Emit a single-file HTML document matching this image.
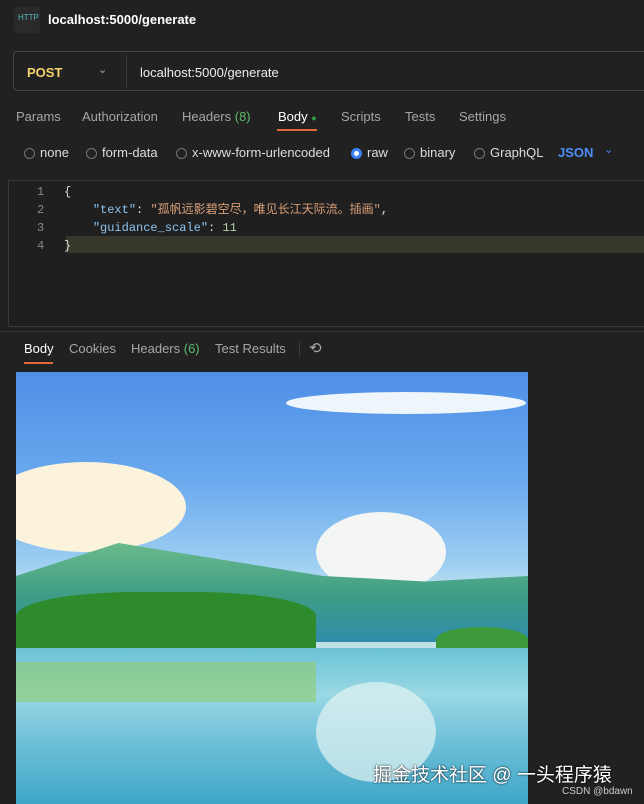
<!DOCTYPE html><html><head><meta charset="utf-8"><style>
body{margin:0;width:644px;height:804px;background:#212121;font-family:"Liberation Sans","Noto Sans CJK SC",sans-serif;position:relative;overflow:hidden;color:#ddd}
.a{position:absolute;white-space:nowrap}
.t{font-size:13px;color:#a6a6a6}
.mono{font-family:"Liberation Mono","Noto Sans CJK SC",monospace;font-size:12px}
.r{display:inline-block;width:11px;height:11px;border:1px solid #777;border-radius:50%;vertical-align:-2px;margin-right:5px;box-sizing:border-box}
</style></head><body>
<div class="a" style="left:14px;top:7px;width:26px;height:26px;background:#2a2a2a;border-radius:3px"></div>
<div class="a" style="left:18px;top:13px;font-size:8px;color:#5bb;">HTTP</div>
<div class="a" style="left:48px;top:12px;font-size:13px;color:#fff;font-weight:bold">localhost:5000/generate</div>
<div class="a" style="left:13px;top:51px;width:640px;height:40px;border:1px solid #444;border-radius:4px;box-sizing:border-box"></div>
<div class="a" style="left:126px;top:55px;width:1px;height:32px;background:#3a3a3a"></div>
<div class="a" style="left:27px;top:65px;font-size:13px;color:#f5d36e;font-weight:bold">POST</div>
<div class="a" style="left:98px;top:63px;font-size:11px;color:#aaa">⌄</div>
<div class="a" style="left:140px;top:65px;font-size:13px;color:#eee">localhost:5000/generate</div>
<div class="a t" style="left:16px;top:109px">Params</div>
<div class="a t" style="left:82px;top:109px">Authorization</div>
<div class="a t" style="left:182px;top:109px">Headers <span style="color:#5fb96b">(8)</span></div>
<div class="a" style="left:278px;top:109px;font-size:13px;color:#fff">Body <span style="color:#2ea043;font-size:9px">●</span></div>
<div class="a" style="left:277px;top:129px;width:40px;height:2px;background:#e0683b"></div>
<div class="a t" style="left:341px;top:109px">Scripts</div>
<div class="a t" style="left:405px;top:109px">Tests</div>
<div class="a t" style="left:459px;top:109px">Settings</div>
<div class="a" style="left:24px;top:145px;font-size:13px;color:#ddd"><span class="r"></span>none</div>
<div class="a" style="left:86px;top:145px;font-size:13px;color:#ddd"><span class="r"></span>form-data</div>
<div class="a" style="left:176px;top:145px;font-size:13px;color:#ddd"><span class="r"></span>x-www-form-urlencoded</div>
<div class="a" style="left:351px;top:145px;font-size:13px;color:#ddd"><span class="r" style="border:3px solid #3b82f6;background:#fff"></span>raw</div>
<div class="a" style="left:404px;top:145px;font-size:13px;color:#ddd"><span class="r"></span>binary</div>
<div class="a" style="left:474px;top:145px;font-size:13px;color:#ddd"><span class="r"></span>GraphQL</div>
<div class="a" style="left:558px;top:145px;font-size:13px;color:#4c8ef7;font-weight:bold">JSON</div>
<div class="a" style="left:604px;top:143px;font-size:11px;color:#4c8ef7">⌄</div>
<div class="a" style="left:8px;top:180px;width:640px;height:145px;border-left:1px solid #3a3a3a;border-top:1px solid #3a3a3a;border-bottom:1px solid #3a3a3a;background:#1f1f1f"></div>
<div class="a" style="left:66px;top:236px;width:580px;height:17px;background:#36362a"></div>
<div class="a mono" style="left:37px;top:183px;color:#888;line-height:18px">1<br>2<br>3<br>4</div>
<div class="a mono" style="left:64px;top:183px;line-height:18px;color:#ddd">{<br>&nbsp;&nbsp;&nbsp;&nbsp;<span style="color:#8cc4f0">"text"</span>: <span style="color:#d9a07a">"孤帆远影碧空尽，唯见长江天际流。插画"</span>,<br>&nbsp;&nbsp;&nbsp;&nbsp;<span style="color:#8cc4f0">"guidance_scale"</span>: <span style="color:#b5cea8">11</span><br>}</div>
<div class="a" style="left:0;top:331px;width:644px;height:1px;background:#333"></div>
<div class="a" style="left:24px;top:341px;font-size:13px;color:#fff">Body</div>
<div class="a" style="left:24px;top:362px;width:29px;height:2px;background:#e0683b"></div>
<div class="a t" style="left:69px;top:341px">Cookies</div>
<div class="a t" style="left:131px;top:341px">Headers <span style="color:#5fb96b">(6)</span></div>
<div class="a t" style="left:215px;top:341px">Test Results</div>
<div class="a" style="left:299px;top:341px;width:1px;height:16px;background:#3a3a3a"></div>
<div class="a" style="left:309px;top:339px;font-size:15px;color:#aaa">⟲</div>
<div class="a" style="left:16px;top:372px;width:512px;height:432px;overflow:hidden;background:linear-gradient(#4f8fe6 0%,#6aa9ee 25%,#9fd0f2 45%,#c8e6ef 52%,#bfe0e6 56%)">
 <div class="a" style="left:270px;top:20px;width:240px;height:22px;border-radius:50%;background:#eef6fb"></div>
 <div class="a" style="left:-30px;top:90px;width:200px;height:90px;border-radius:50%;background:#fbf3dc"></div>
 <div class="a" style="left:300px;top:140px;width:130px;height:80px;border-radius:50%;background:#f4f6f4"></div>
 <div class="a" style="left:0;top:160px;width:512px;height:110px;background:linear-gradient(#73c08c,#3d9c86 60%,#2f8cab);clip-path:polygon(0 40%,20% 10%,40% 25%,60% 40%,80% 45%,100% 40%,100% 100%,0 100%)"></div>
 <div class="a" style="left:0;top:220px;width:300px;height:60px;background:#2e8b2c;border-radius:40% 40% 0 0"></div>
 <div class="a" style="left:420px;top:255px;width:92px;height:25px;background:#3c9a3a;border-radius:50% 50% 0 0"></div>
 <div class="a" style="left:0;top:276px;width:512px;height:156px;background:linear-gradient(#6cc3d6,#9ad8e4 30%,#6ec0d8 60%,#3fa6c8)"></div>
 <div class="a" style="left:0;top:290px;width:300px;height:40px;background:#8fcb6c;opacity:.6"></div>
 <div class="a" style="left:300px;top:310px;width:120px;height:100px;border-radius:50%;background:#e4f3f4;opacity:.7"></div>
</div>
<div class="a" style="left:373px;top:760px;font-size:19px;color:#fff;text-shadow:0 0 2px #000">掘金技术社区 @ 一头程序猿</div>
<div class="a" style="left:562px;top:786px;font-size:10px;color:#ccc">CSDN @bdawn</div>
</body></html>
